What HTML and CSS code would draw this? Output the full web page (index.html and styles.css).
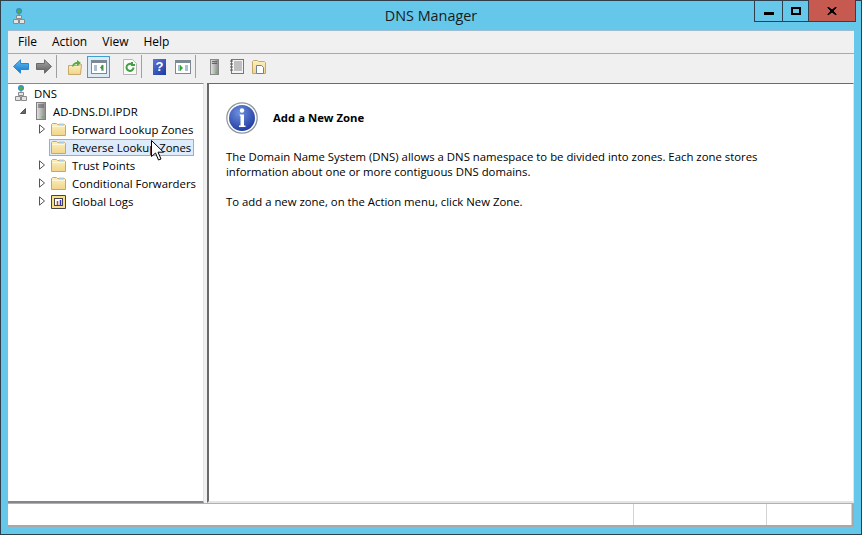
FILE: index.html
```html
<!DOCTYPE html>
<html lang="en">
<head>
<meta charset="utf-8">
<title>DNS Manager</title>
<link rel="stylesheet" href="styles.css">
</head>
<body>
<svg class="defs" width="0" height="0" aria-hidden="true">
  <defs>
    <linearGradient id="fold" x1="0" y1="0" x2="0" y2="1"><stop offset="0" stop-color="#fdf0bd"/><stop offset="1" stop-color="#f0d48c"/></linearGradient>
    <linearGradient id="blue" x1="0" y1="0" x2="0" y2="1"><stop offset="0" stop-color="#5fc0f5"/><stop offset="1" stop-color="#1573c7"/></linearGradient>
    <linearGradient id="grey" x1="0" y1="0" x2="0" y2="1"><stop offset="0" stop-color="#a8a8a8"/><stop offset="1" stop-color="#5c5c5c"/></linearGradient>
    <radialGradient id="orb" cx=".4" cy=".3" r=".8"><stop offset="0" stop-color="#6f90e0"/><stop offset="1" stop-color="#16349a"/></radialGradient>
    <linearGradient id="tower" x1="0" y1="0" x2="1" y2="0"><stop offset="0" stop-color="#e4e4e4"/><stop offset="1" stop-color="#8a8a8a"/></linearGradient>
    <symbol id="folder" viewBox="0 0 15 14">
      <path d="M.5 13.500V2.500l1-1h4l1 1h7l1 1v10z" fill="url(#fold)" stroke="#c6a868"/>
      <path d="M8 1.500h5v2H8z" fill="#a9cfe6"/>
      <path d="M1 4.500h13" stroke="#fff6d6"/>
    </symbol>
    <symbol id="net" viewBox="0 0 12 17">
      <circle cx="6" cy="3" r="3" fill="#2e8fd0"/>
      <path d="M4 1.500h3l1 2-2 2-2-2z" fill="#5caa3c"/>
      <path d="M6 6v3" stroke="#666"/>
      <path d="M3.500 7.500h5v3h-5zM.5 11.500h5v4h-5zM6.500 11.500h5v4h-5z" fill="#e4e4e4" stroke="#8a8a8a"/>
    </symbol>
    <symbol id="server" viewBox="0 0 10 18">
      <rect x=".5" y=".5" width="9" height="17" fill="url(#tower)" stroke="#808080"/>
      <path d="M2 3h6M2 5h6" stroke="#555"/>
      <rect x="6" y="14" width="2" height="2" fill="#5cc04a"/>
    </symbol>
    <symbol id="arrow" viewBox="0 0 8 10">
      <path d="M1.500.8l5 4.200-5 4.200z" fill="#fff" stroke="#555"/>
    </symbol>
    <symbol id="win" viewBox="0 0 16 14">
      <rect x=".5" y=".5" width="15" height="13" fill="#fff" stroke="#7d8a96"/>
      <rect x="1" y="1" width="14" height="2" fill="#7d8a96"/>
      <path d="M3 6h3M3 8h3M3 10h3M10 6h3M10 8h3M10 10h3" stroke="#5a7fa5"/>
    </symbol>
  </defs>
</svg>
<div class="window">
  <header class="titlebar">
    <svg class="app-icon" width="12" height="17"><use href="#net"/></svg>
    <h1 class="title">DNS Manager</h1>
    <div class="controls">
      <div class="ctl ctl-min"><span class="min-glyph"></span></div>
      <div class="ctl ctl-max"><span class="max-glyph"></span></div>
      <div class="ctl ctl-close">
        <svg width="10" height="8" viewBox="0 0 10 8"><path d="M1 0l4 3 4-3v1L6 4l3 3v1L5 5 1 8V7l3-3-3-3z" fill="#000" stroke="#000" stroke-width="1"/></svg>
      </div>
    </div>
  </header>
  <div class="client">
    <nav class="menubar">
      <span class="menu">File</span>
      <span class="menu">Action</span>
      <span class="menu">View</span>
      <span class="menu">Help</span>
    </nav>
    <div class="toolbar">
      <div class="tb tb-back"><svg width="16" height="15" viewBox="0 0 16 15"><path d="M.5 7.500L7.500.8v3.700h8v6h-8v3.700z" fill="url(#blue)" stroke="#2a86d0"/></svg></div>
      <div class="tb tb-fwd"><svg width="16" height="15" viewBox="0 0 16 15"><path d="M15.500 7.500L8.500.8v3.700h-8v6h8v3.700z" fill="url(#grey)" stroke="#6a6a6a"/></svg></div>
      <span class="sep"></span>
      <div class="tb tb-up"><svg width="15" height="16" viewBox="0 0 15 16"><path d="M.5 15.500V6.500h9l4-1-1 10z" fill="url(#fold)" stroke="#c6a868"/><path d="M4 7c1-3 3-4 5-4V1l4 3-4 3V5C7 5 6 6 5 8z" fill="#5aa83a"/></svg></div>
      <div class="tb tb-active"><svg width="16" height="14"><use href="#win"/><path d="M12 4.500v6l-3-3z" fill="#3a9a3a"/></svg></div>
      <div class="tb tb-ref"><svg width="14" height="16" viewBox="0 0 14 16"><path d="M.5.5h9l4 4v11H.5z" fill="#fafafa" stroke="#b5b5b5"/><path d="M10.500 8.500a3.500 3.500 0 1 1-1.500-3M9 3v3h3" fill="none" stroke="#3fa23f" stroke-width="2"/></svg></div>
      <span class="sep"></span>
      <div class="tb tb-help"><span class="help-box">?</span></div>
      <div class="tb tb-pane"><svg width="16" height="14"><use href="#win"/><path d="M5 5v6l3-3z" fill="#2aa82a"/></svg></div>
      <span class="sep"></span>
      <div class="tb tb-srv"><svg width="9" height="16"><use href="#server"/></svg></div>
      <div class="tb tb-list"><svg width="14" height="15" viewBox="0 0 14 15"><rect x="1.500" y=".5" width="12" height="14" fill="#f4f4f4" stroke="#777"/><path d="M4 3h8M4 5h8M4 7h8M4 9h8M4 11h8" stroke="#8a8a8a"/><path d="M0 2h3M0 5h3M0 8h3M0 11h3" stroke="#555"/></svg></div>
      <div class="tb tb-file"><svg width="14" height="15" viewBox="0 0 14 15"><path d="M.5 14.500v-12l1-1h4l1 1h6l1 1v11z" fill="url(#fold)" stroke="#c6a868"/><path d="M4.500 6.500h5l2 2v6h-7z" fill="#fff" stroke="#6e8296"/></svg></div>
    </div>
    <main class="panes">
      <aside class="tree">
        <div class="row row-root"><svg class="ico-net" width="12" height="17"><use href="#net"/></svg><span>DNS</span></div>
        <div class="row row-srv"><svg class="exp" width="8" height="10" viewBox="0 0 8 10"><path d="M6.500 2.500v5h-5z" fill="#666" stroke="#555"/></svg><svg class="ico-srv" width="10" height="18"><use href="#server"/></svg><span>AD-DNS.DI.IPDR</span></div>
        <div class="row row-child"><svg class="exp" width="8" height="10"><use href="#arrow"/></svg><svg class="ico-fold" width="15" height="14"><use href="#folder"/></svg><span>Forward Lookup Zones</span></div>
        <div class="row row-child row-sel"><span class="exp-none"></span><svg class="ico-fold" width="15" height="14"><use href="#folder"/></svg><span>Reverse Lookup Zones</span></div>
        <div class="row row-child"><svg class="exp" width="8" height="10"><use href="#arrow"/></svg><svg class="ico-fold" width="15" height="14"><use href="#folder"/></svg><span>Trust Points</span></div>
        <div class="row row-child"><svg class="exp" width="8" height="10"><use href="#arrow"/></svg><svg class="ico-fold" width="15" height="14"><use href="#folder"/></svg><span>Conditional Forwarders</span></div>
        <div class="row row-child"><svg class="exp" width="8" height="10"><use href="#arrow"/></svg><svg class="ico-fold" width="15" height="15" viewBox="0 0 15 15"><path d="M.5 14.500v-13h14v13z" fill="#f7e08a" stroke="#444"/><rect x="3.500" y="4.500" width="8" height="7" fill="#fff" stroke="#444"/><path d="M6.500 7v4" stroke="#d33" stroke-width="1.500"/><path d="M9.500 6v5" stroke="#33c" stroke-width="1.500"/></svg><span>Global Logs</span></div>
      </aside>
      <section class="detail">
        <div class="detail-head">
          <svg class="info" width="32" height="32" viewBox="0 0 32 32">
            <circle cx="16" cy="16" r="15.200" fill="#fff" stroke="#8e949e" stroke-width="1.200"/>
            <circle cx="16" cy="16" r="13" fill="url(#orb)"/>
            <circle cx="16" cy="8.500" r="2.200" fill="#fff"/>
            <path d="M13.500 12.500h4.500v11h1.500v1.500h-6.500v-1.500h1.500v-9.500h-.5z" fill="#fff"/>
          </svg>
          <h2 class="detail-title">Add a New Zone</h2>
        </div>
        <p class="para">The Domain Name System (DNS) allows a DNS namespace to be divided into zones. Each zone stores<br>information about one or more contiguous DNS domains.</p>
        <p class="para">To add a new zone, on the Action menu, click New Zone.</p>
      </section>
    </main>
    <footer class="status">
      <span class="seg seg-a"></span>
      <span class="seg seg-b"></span>
      <span class="seg seg-c"></span>
    </footer>
  </div>
  <svg class="cursor" width="13" height="21" viewBox="0 0 13 21"><path d="M.5.5v16l4-3.500 3 7 2.500-1-3-6.800h5.500z" fill="#fff" stroke="#000"/></svg>
</div>
</body>
</html>
```
FILE: styles.css
```css
* { box-sizing: border-box; }
html, body { margin: 0; padding: 0; }
body {
  width: 862px;
  height: 535px;
  overflow: hidden;
  font-family: "Open Sans", "Noto Sans", sans-serif;
  font-size: 11.35px;
  color: #000;
}
svg { flex: none; }
.defs { position: absolute; }
.window {
  position: relative;
  width: 862px;
  height: 535px;
  display: flex;
  flex-direction: column;
  background: #65c8ea;
  border: 1px solid #2f3f4b;
  padding: 0 7px 7px;
}
.titlebar {
  height: 29px;
  flex: none;
  position: relative;
  display: flex;
  justify-content: center;
}
.app-icon { position: absolute; left: 5px; top: 7px; }
.title {
  margin: 0;
  font-size: 14.4px;
  font-weight: 400;
  line-height: 29px;
  color: #1a1a1a;
}
.controls {
  position: absolute;
  right: -2px;
  top: -1px;
  display: flex;
  height: 22px;
  border: 1px solid #2f3f4b;
  border-top: 0;
}
.ctl { display: flex; align-items: center; justify-content: center; height: 21px; }
.ctl-min { width: 28px; border-right: 1px solid #2f3f4b; }
.ctl-max { width: 26px; border-right: 1px solid #2f3f4b; }
.ctl-close { width: 46px; background: #c65a50; }
.min-glyph { width: 10px; height: 3px; background: #000; margin-top: 6px; }
.max-glyph { width: 10px; height: 8px; border: 2px solid #000; }
.client {
  flex: 1;
  display: flex;
  flex-direction: column;
  min-height: 0;
  background: #f0f0f0;
  border-top: 1px solid #9fbcd0;
}
.menubar {
  height: 23px;
  flex: none;
  display: flex;
  align-items: center;
  padding: 0 0 2px 10px;
  gap: 15px;
  font-size: 12px;
  border-bottom: 1px solid #a8a8b4;
}
.toolbar {
  height: 29px;
  flex: none;
  display: flex;
  align-items: center;
  padding: 0 0 4px 5px;
}
.tb { display: flex; align-items: center; justify-content: center; height: 22px; flex: none; }
.tb-back { width: 16px; }
.tb-fwd { width: 16px; margin-left: 7px; margin-right: 4px; }
.sep { width: 1px; height: 23px; background: #a0a0a0; flex: none; }
.tb-up { width: 15px; margin-left: 11px; }
.tb-active {
  width: 23px;
  margin-left: 4px;
  background: #dceaf6;
  border: 1px solid #3c9fd8;
}
.tb-ref { width: 14px; margin-left: 13px; margin-right: 4px; }
.tb-help { width: 13px; margin-left: 11px; }
.help-box {
  width: 13px;
  height: 16px;
  display: block;
  background: linear-gradient(135deg, #5d77d6, #1c3aa0);
  color: #fff;
  font: 700 13px/16px "Liberation Sans", sans-serif;
  text-align: center;
}
.tb-pane { width: 16px; margin-left: 9px; margin-right: 4px; }
.tb-srv { width: 9px; margin-left: 14px; }
.tb-list { width: 14px; margin-left: 11px; }
.tb-file { width: 14px; margin-left: 8px; }
.panes { flex: 1; min-height: 0; display: flex; gap: 3px; background: #f0f0f0; }
.tree {
  width: 196px;
  flex: none;
  background: #fff;
  border-top: 1px solid #8a8a8a;
  border-bottom: 2px solid #85858d;
  border-right: 1px solid #e4e4e4;
}
.row {
  height: 18px;
  display: flex;
  align-items: center;
  white-space: nowrap;
}
.row-root { padding-left: 7px; gap: 7px; }
.row-srv { padding-left: 11px; }
.row-srv .ico-srv { margin-left: 9px; margin-right: 7px; }
.row-child { padding-left: 30px; width: 186px; }
.row-child .ico-fold { margin-left: 5px; margin-right: 6px; }
.exp-none { width: 8px; flex: none; }
.row-sel { position: relative; z-index: 0; }
.row-sel::before {
  content: "";
  position: absolute;
  left: 41px;
  right: 0;
  top: 1px;
  bottom: 0;
  background: #deebfa;
  border: 1px solid #8fb0dc;
  z-index: -1;
}
.detail {
  flex: 1;
  background: #fff;
  border-top: 1px solid #6a6a6a;
  border-left: 2px solid #6a6a6a;
  border-bottom: 2px solid #e4e4e4;
  border-right: 1px solid #e4e4e4;
  padding: 18px 0 0 17px;
}
.detail-head { display: flex; align-items: center; gap: 15px; margin-bottom: 15px; }
.info { flex: none; }
.detail-title { margin: 0 0 2px; font-size: 11.35px; font-weight: 700; }
.para { margin: 0 0 15px; line-height: 15px; }
.status {
  height: 24px;
  flex: none;
  display: flex;
  background: #fff;
  border-top: 1px solid #b0b0b0;
  border-bottom: 2px solid #a8a8a8;
  border-right: 2px solid #a8a8a8;
}
.seg { border-right: 1px solid #d4d4d4; }
.seg-a { width: 626px; }
.seg-b { width: 133px; }
.seg-c { width: 85px; }
.cursor { position: absolute; left: 150px; top: 139px; }
```
